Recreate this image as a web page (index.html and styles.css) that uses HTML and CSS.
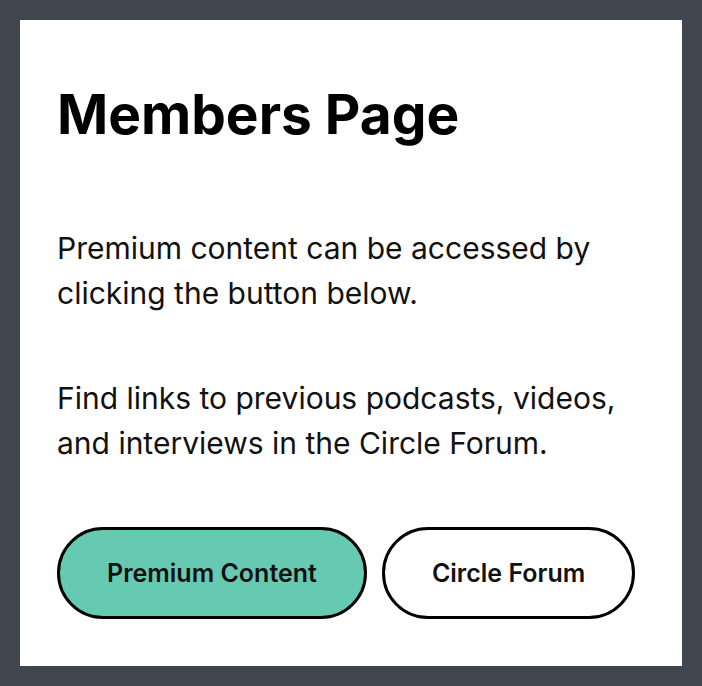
FILE: index.html
```html
<!DOCTYPE html>
<html lang="en">
<head>
<meta charset="utf-8">
<title>Members Page</title>
<link rel="stylesheet" href="styles.css">
</head>
<body>
<main class="card">
  <h1 class="title">Members Page</h1>
  <p class="text">Premium content can be accessed by clicking the button below.</p>
  <p class="text text-second">Find links to previous podcasts, videos, and interviews in the Circle Forum.</p>
  <div class="actions">
    <a class="btn btn-primary" href="#">Premium Content</a>
    <a class="btn btn-outline" href="#">Circle Forum</a>
  </div>
</main>
</body>
</html>
```

FILE: styles.css
```css
html, body {
  margin: 0;
  padding: 0;
}
body {
  background: #3f464d;
  padding: 20px;
  font-family: Inter, "Noto Sans", sans-serif;
  color: #000;
  box-sizing: border-box;
  height: 686px;
}
.card {
  background: #fff;
  height: 646px;
  box-sizing: border-box;
  padding: 61px 37px 48px 37px;
}
.title {
  margin: 0;
  font-size: 55px;
  font-weight: 700;
  line-height: 66px;
  letter-spacing: 0;
}
.text {
  margin: 79px 0 0 0;
  font-size: 30px;
  line-height: 45px;
  font-weight: 400;
  color: #111;
}
.text-second {
  margin-top: 60px;
}
.actions {
  display: flex;
  gap: 15px;
  margin-top: 61px;
}
.btn {
  display: flex;
  align-items: center;
  justify-content: center;
  height: 92px;
  box-sizing: border-box;
  padding: 0 47px;
  border: 3px solid #000;
  border-radius: 46px;
  font-size: 25px;
  font-weight: 600;
  color: #111;
  text-decoration: none;
}
.btn-primary {
  background: #66c9b1;
}
.btn-outline {
  background: #fff;
}
```
